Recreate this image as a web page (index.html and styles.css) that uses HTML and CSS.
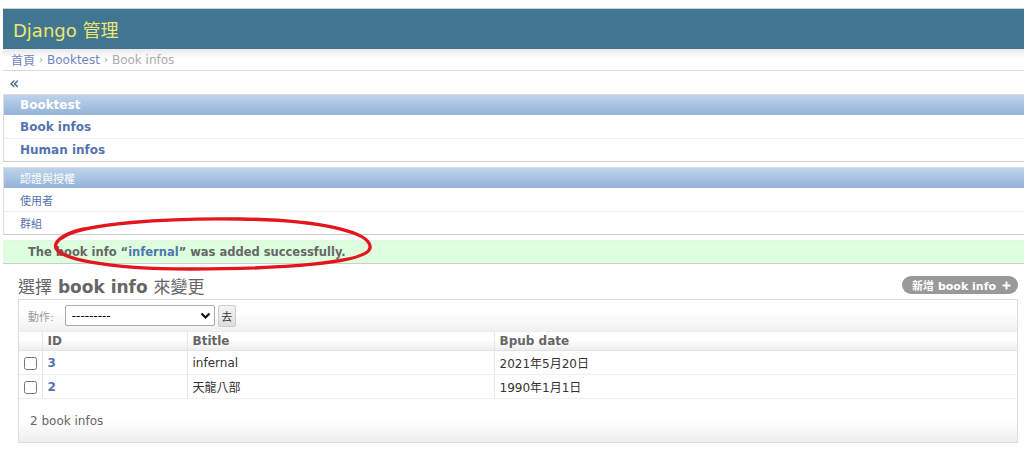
FILE: index.html
```html
<!DOCTYPE html>
<html lang="zh-Hant">
<head>
<meta charset="utf-8">
<title>選擇 book info 來變更 | Django 管理</title>
<link rel="stylesheet" href="styles.css">
</head>
<body>
<div class="page">
  <header class="header"><span class="brand">Django 管理</span></header>
  <nav class="breadcrumbs">
    <a href="#">首頁</a><span class="sep">›</span><a href="#">Booktest</a><span class="sep">›</span><span>Book infos</span>
  </nav>
  <div class="toggle">«</div>

  <div class="module">
    <div class="caption">Booktest</div>
    <div class="row"><a class="strong" href="#">Book infos</a></div>
    <div class="row"><a class="strong" href="#">Human infos</a></div>
  </div>

  <div class="module">
    <div class="caption cjk">認證與授權</div>
    <div class="row"><a class="small" href="#">使用者</a></div>
    <div class="row"><a class="small" href="#">群組</a></div>
  </div>

  <div class="message">The book info “<a href="#">infernal</a>” was added successfully.</div>

  <main class="content">
    <div class="title-row">
      <h1><span class="cjk">選擇</span> book info <span class="cjk">來變更</span></h1>
      <a class="addlink" href="#"><span>新增 book info</span>
        <svg class="plus" width="9" height="9" viewBox="0 0 9 9"><path d="M4.5 0.5v8M0.5 4.5h8" stroke="#fff" stroke-width="2"/></svg>
      </a>
    </div>

    <div class="changelist">
      <div class="actions">
        <label class="actions-label">動作:</label>
        <span class="select-wrap">
          <select class="select"><option>---------</option></select>
          <svg class="chevron" width="11" height="8" viewBox="0 0 11 8"><path d="M1.5 1.5l4 4 4-4" fill="none" stroke="#111" stroke-width="2.2"/></svg>
        </span>
        <button class="go">去</button>
      </div>
      <table class="results">
        <colgroup>
          <col class="c-check"><col class="c-id"><col class="c-title"><col>
        </colgroup>
        <thead>
          <tr><th></th><th>ID</th><th>Btitle</th><th>Bpub date</th></tr>
        </thead>
        <tbody>
          <tr><td class="check"><input type="checkbox"></td><td><a class="strong" href="#">3</a></td><td>infernal</td><td>2021年5月20日</td></tr>
          <tr><td class="check"><input type="checkbox"></td><td><a class="strong" href="#">2</a></td><td>天龍八部</td><td>1990年1月1日</td></tr>
        </tbody>
      </table>
      <div class="paginator">2 book infos</div>
    </div>
  </main>

  <svg class="ellipse" width="400" height="290" viewBox="0 0 400 290">
    <path d="M62 238 C 80 223, 170 218, 240 219 C 320 220, 372 232, 370 248 C 368 263, 280 269, 190 269 C 110 269, 50 259, 56 244 C 58 238, 70 232, 84 229" fill="none" stroke="#e3161d" stroke-width="3.4" stroke-linecap="round"/>
  </svg>
</div>
</body>
</html>
```

FILE: styles.css
```css
body {
  margin: 0;
  background: #fff;
  color: #333;
  font-family: "DejaVu Sans", "Noto Sans CJK TC", sans-serif;
  font-size: 12px;
}

a {
  color: #5b80b2;
  text-decoration: none;
}

.page {
  position: relative;
  padding: 8px 0 0 3px;
}

.header {
  height: 40px;
  border-top: 1px solid #d0d0d0;
  background: #417690;
  display: flex;
  align-items: center;
  padding-left: 10px;
}

.brand {
  color: #eee672;
  font-size: 18px;
}

.breadcrumbs {
  height: 21px;
  display: flex;
  align-items: center;
  padding-left: 8px;
  background: linear-gradient(#e9e9e9, #fff 9px);
  border-bottom: 1px solid #ddd;
  color: #aaa;
  font-size: 12px;
}

.breadcrumbs a {
  color: #6f84bd;
}

.sep {
  color: #999;
  margin: 0 4px;
  font-size: 10px;
}

.toggle {
  height: 23px;
  display: flex;
  align-items: center;
  padding-left: 6px;
  font-size: 17px;
  color: #3d5a78;
}

.module {
  border: 1px solid #ddd;
  border-right: none;
  border-bottom-color: #ccc;
}

.module + .module {
  margin-top: 5px;
}

.caption {
  height: 20px;
  display: flex;
  align-items: center;
  padding-left: 16px;
  background: linear-gradient(#bed3ea, #93b3d8);
  color: #fff;
  font-weight: bold;
  font-size: 12px;
}

.caption.cjk {
  font-weight: normal;
  font-size: 11px;
}

.row {
  height: 23px;
  display: flex;
  align-items: center;
  padding-left: 16px;
}

.row + .row {
  border-top: 1px solid #eee;
  height: 22px;
}

.strong {
  font-weight: bold;
  font-size: 12px;
  color: #5573b0;
}

.small {
  font-size: 11px;
  color: #5573b0;
}

.message {
  margin-top: 5px;
  height: 22px;
  display: flex;
  align-items: center;
  padding-left: 25px;
  background: #dfd;
  border-top: 1px solid #e8f3e8;
  border-bottom: 1px solid #ccc;
  color: #666;
  font-weight: bold;
  font-size: 11.5px;
}

.message a {
  color: #4f78b0;
}

.content {
  padding: 9px 6px 0 15px;
}

.title-row {
  display: flex;
  justify-content: space-between;
  align-items: center;
  height: 24px;
  margin-bottom: 2px;
}

h1 {
  margin: 0;
  font-size: 17px;
  font-weight: bold;
  color: #666;
}

h1 .cjk {
  font-weight: normal;
}

.addlink {
  display: inline-flex;
  align-items: center;
  gap: 6px;
  height: 18px;
  padding: 0 7px 0 10px;
  border-radius: 9px;
  background: #999;
  color: #fff;
  font-size: 11px;
  font-weight: bold;
}

.changelist {
  border: 1px solid #ddd;
  margin-top: 2px;
}

.actions {
  height: 31px;
  display: flex;
  align-items: center;
  padding-left: 9px;
  background: linear-gradient(#fff 40%, #f1f1f1);
  border-bottom: 1px solid #eee;
}

.actions-label {
  color: #999;
  font-size: 11px;
  margin-right: 11px;
}

.select-wrap {
  position: relative;
  display: inline-block;
}

.select {
  appearance: none;
  -webkit-appearance: none;
  width: 150px;
  height: 21px;
  border: 1px solid #aaa;
  border-radius: 2px;
  background: #fff;
  color: #000;
  font-family: "DejaVu Sans", sans-serif;
  font-size: 12px;
  padding: 0 6px;
  display: block;
}

.chevron {
  position: absolute;
  right: 4px;
  top: 7px;
  pointer-events: none;
}

.go {
  margin-left: 3px;
  width: 18px;
  height: 22px;
  padding: 0;
  border: 1px solid #ccc;
  border-radius: 2px;
  background: linear-gradient(#f5f5f5, #ddd);
  font-family: "Noto Sans CJK TC", sans-serif;
  font-size: 11px;
  color: #333;
}

.results {
  width: 100%;
  border-collapse: collapse;
  table-layout: fixed;
}

.c-check { width: 23px; }
.c-id { width: 145px; }
.c-title { width: 307px; }

.results th {
  height: 18px;
  padding: 0 5px;
  text-align: left;
  color: #666;
  font-size: 12px;
  font-weight: bold;
  background: linear-gradient(#fff 45%, #ededed);
  border-bottom: 1px solid #e4e4e4;
}

.results th + th,
.results td + td {
  border-left: 1px solid #e6e6e6;
}

.results td {
  height: 23px;
  padding: 0 5px;
  border-bottom: 1px solid #eee;
  font-size: 12px;
  color: #333;
}

.results td.check {
  padding: 0;
  text-align: center;
}

.results input {
  width: 13px;
  height: 13px;
  margin: 0;
  vertical-align: middle;
}

.paginator {
  height: 43px;
  display: flex;
  align-items: center;
  padding-left: 11px;
  color: #666;
  font-size: 12px;
  background: linear-gradient(#fff 50%, #eee);
}

.ellipse {
  position: absolute;
  left: 0;
  top: 0;
  pointer-events: none;
}
```
